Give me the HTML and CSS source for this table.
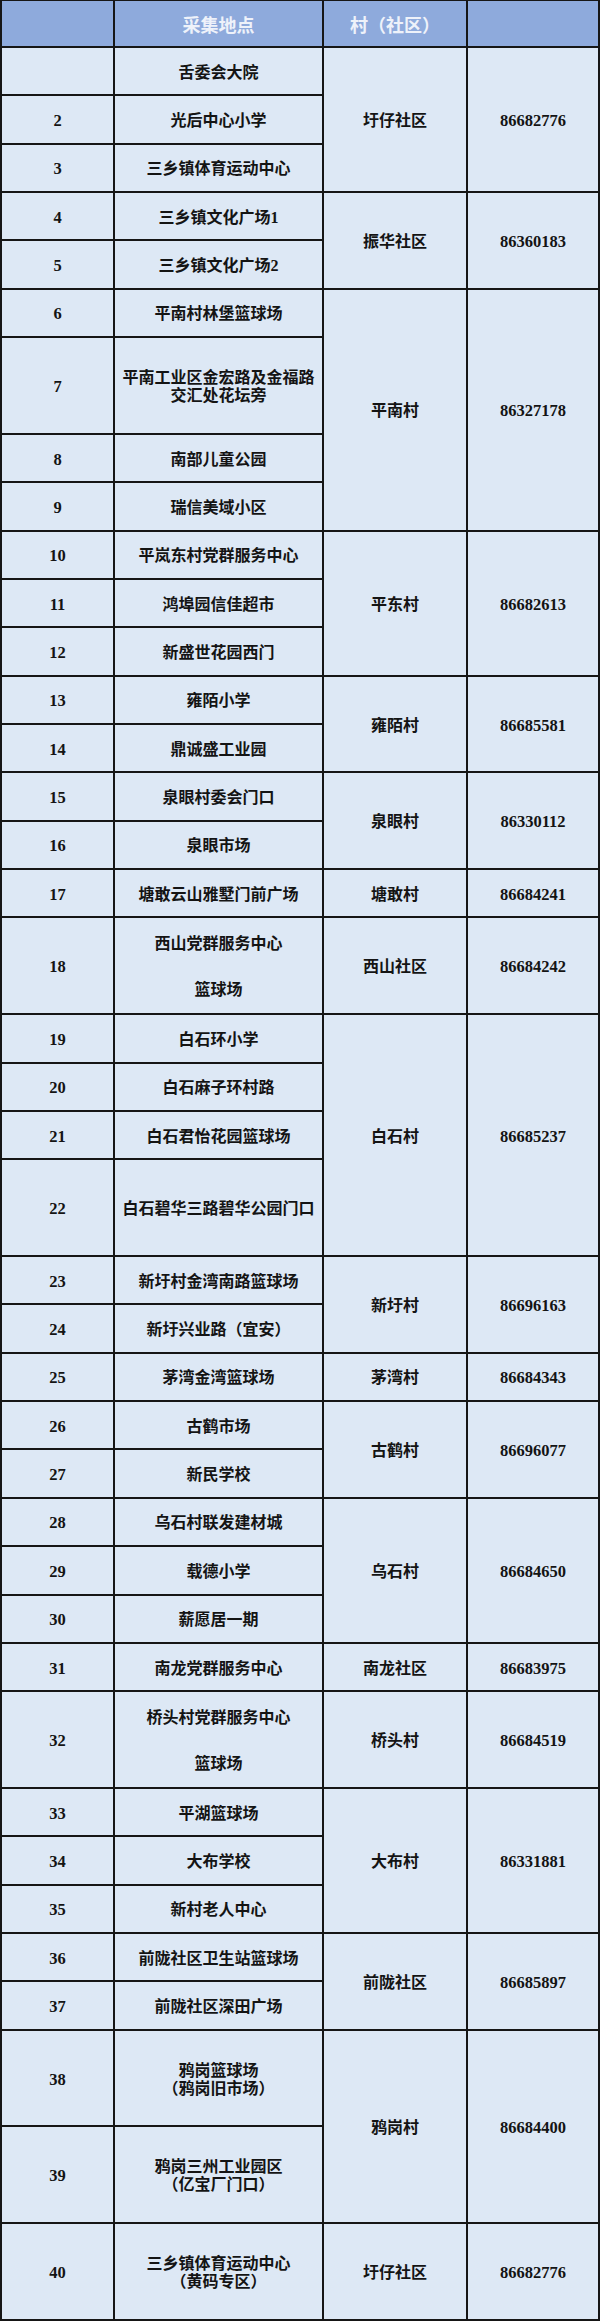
FILE: index.html
```html
<!DOCTYPE html>
<html lang="zh-CN">
<head>
<meta charset="utf-8">
<title>采集地点</title>
<link rel="stylesheet" href="styles.css">
</head>
<body>
<div class="sheet">
  <div class="cell head c1"></div>
  <div class="cell head c2">采集地点</div>
  <div class="cell head c3">村（社区）</div>
  <div class="cell head c4"></div>

  <div class="cell c1"></div><div class="cell c2">舌委会大院</div><div class="cell c3 r3">圩仔社区</div><div class="cell c4 r3 num">86682776</div>
  <div class="cell c1 num">2</div><div class="cell c2">光后中心小学</div>
  <div class="cell c1 num">3</div><div class="cell c2">三乡镇体育运动中心</div>

  <div class="cell c1 num">4</div><div class="cell c2">三乡镇文化广场1</div><div class="cell c3 r2">振华社区</div><div class="cell c4 r2 num">86360183</div>
  <div class="cell c1 num">5</div><div class="cell c2">三乡镇文化广场2</div>

  <div class="cell c1 num">6</div><div class="cell c2">平南村林堡篮球场</div><div class="cell c3 r5">平南村</div><div class="cell c4 r5 num">86327178</div>
  <div class="cell c1 r2 num">7</div><div class="cell c2 r2 wrap">平南工业区金宏路及金福路<br>交汇处花坛旁</div>
  <div class="cell c1 num">8</div><div class="cell c2">南部儿童公园</div>
  <div class="cell c1 num">9</div><div class="cell c2">瑞信美域小区</div>

  <div class="cell c1 num">10</div><div class="cell c2">平岚东村党群服务中心</div><div class="cell c3 r3">平东村</div><div class="cell c4 r3 num">86682613</div>
  <div class="cell c1 num">11</div><div class="cell c2">鸿埠园信佳超市</div>
  <div class="cell c1 num">12</div><div class="cell c2">新盛世花园西门</div>

  <div class="cell c1 num">13</div><div class="cell c2">雍陌小学</div><div class="cell c3 r2">雍陌村</div><div class="cell c4 r2 num">86685581</div>
  <div class="cell c1 num">14</div><div class="cell c2">鼎诚盛工业园</div>

  <div class="cell c1 num">15</div><div class="cell c2">泉眼村委会门口</div><div class="cell c3 r2">泉眼村</div><div class="cell c4 r2 num">86330112</div>
  <div class="cell c1 num">16</div><div class="cell c2">泉眼市场</div>

  <div class="cell c1 num">17</div><div class="cell c2">塘敢云山雅墅门前广场</div><div class="cell c3">塘敢村</div><div class="cell c4 num">86684241</div>

  <div class="cell c1 r2 num">18</div><div class="cell c2 r2 split"><span>西山党群服务中心</span><span>篮球场</span></div><div class="cell c3 r2">西山社区</div><div class="cell c4 r2 num">86684242</div>

  <div class="cell c1 num">19</div><div class="cell c2">白石环小学</div><div class="cell c3 r5">白石村</div><div class="cell c4 r5 num">86685237</div>
  <div class="cell c1 num">20</div><div class="cell c2">白石麻子环村路</div>
  <div class="cell c1 num">21</div><div class="cell c2">白石君怡花园篮球场</div>
  <div class="cell c1 r2 num">22</div><div class="cell c2 r2">白石碧华三路碧华公园门口</div>

  <div class="cell c1 num">23</div><div class="cell c2">新圩村金湾南路篮球场</div><div class="cell c3 r2">新圩村</div><div class="cell c4 r2 num">86696163</div>
  <div class="cell c1 num">24</div><div class="cell c2">新圩兴业路（宜安）</div>

  <div class="cell c1 num">25</div><div class="cell c2">茅湾金湾篮球场</div><div class="cell c3">茅湾村</div><div class="cell c4 num">86684343</div>

  <div class="cell c1 num">26</div><div class="cell c2">古鹤市场</div><div class="cell c3 r2">古鹤村</div><div class="cell c4 r2 num">86696077</div>
  <div class="cell c1 num">27</div><div class="cell c2">新民学校</div>

  <div class="cell c1 num">28</div><div class="cell c2">乌石村联发建材城</div><div class="cell c3 r3">乌石村</div><div class="cell c4 r3 num">86684650</div>
  <div class="cell c1 num">29</div><div class="cell c2">载德小学</div>
  <div class="cell c1 num">30</div><div class="cell c2">薪愿居一期</div>

  <div class="cell c1 num">31</div><div class="cell c2">南龙党群服务中心</div><div class="cell c3">南龙社区</div><div class="cell c4 num">86683975</div>

  <div class="cell c1 r2 num">32</div><div class="cell c2 r2 split"><span>桥头村党群服务中心</span><span>篮球场</span></div><div class="cell c3 r2">桥头村</div><div class="cell c4 r2 num">86684519</div>

  <div class="cell c1 num">33</div><div class="cell c2">平湖篮球场</div><div class="cell c3 r3">大布村</div><div class="cell c4 r3 num">86331881</div>
  <div class="cell c1 num">34</div><div class="cell c2">大布学校</div>
  <div class="cell c1 num">35</div><div class="cell c2">新村老人中心</div>

  <div class="cell c1 num">36</div><div class="cell c2">前陇社区卫生站篮球场</div><div class="cell c3 r2">前陇社区</div><div class="cell c4 r2 num">86685897</div>
  <div class="cell c1 num">37</div><div class="cell c2">前陇社区深田广场</div>

  <div class="cell c1 r2 num">38</div><div class="cell c2 r2 wrap">鸦岗篮球场<br>（鸦岗旧市场）</div><div class="cell c3 r4">鸦岗村</div><div class="cell c4 r4 num">86684400</div>
  <div class="cell c1 r2 num">39</div><div class="cell c2 r2 wrap">鸦岗三州工业园区<br>（亿宝厂门口）</div>

  <div class="cell c1 r2 num">40</div><div class="cell c2 r2 wrap">三乡镇体育运动中心<br>（黄码专区）</div><div class="cell c3 r2">圩仔社区</div><div class="cell c4 r2 num">86682776</div>
</div>
</body>
</html>
```

FILE: styles.css
```css
html, body {
  margin: 0;
  padding: 0;
  background: #ffffff;
}

.sheet {
  width: 600px;
  box-sizing: border-box;
  border-left: 2px solid #161616;
  border-top: 1px solid #161616;
  display: grid;
  grid-template-columns: 113px 209px 144px 132px;
  grid-template-rows: 47px;
  grid-auto-rows: 48.36px;
  font-family: "Liberation Serif", "Noto Sans CJK SC", serif;
  font-weight: 700;
  font-size: 16px;
  color: #141414;
}

.cell {
  box-sizing: border-box;
  border-right: 2px solid #161616;
  border-bottom: 2px solid #161616;
  background: #dde8f5;
  display: flex;
  align-items: center;
  justify-content: center;
  text-align: center;
  padding-top: 3px;
  line-height: 18px;
  white-space: nowrap;
}

.head {
  background: #8eaadc;
  color: #eef2fa;
  font-size: 18px;
  padding-top: 5px;
}

.c1 { grid-column: 1; }
.c2 { grid-column: 2; }
.c3 { grid-column: 3; }
.c4 { grid-column: 4; }

.r2 { grid-row: span 2; }
.r3 { grid-row: span 3; }
.r4 { grid-row: span 4; }
.r5 { grid-row: span 5; }

.num {
  font-size: 16.5px;
}

.wrap {
  line-height: 18px;
}

.split {
  flex-direction: column;
  justify-content: space-around;
}

.split span {
  display: block;
}
```
